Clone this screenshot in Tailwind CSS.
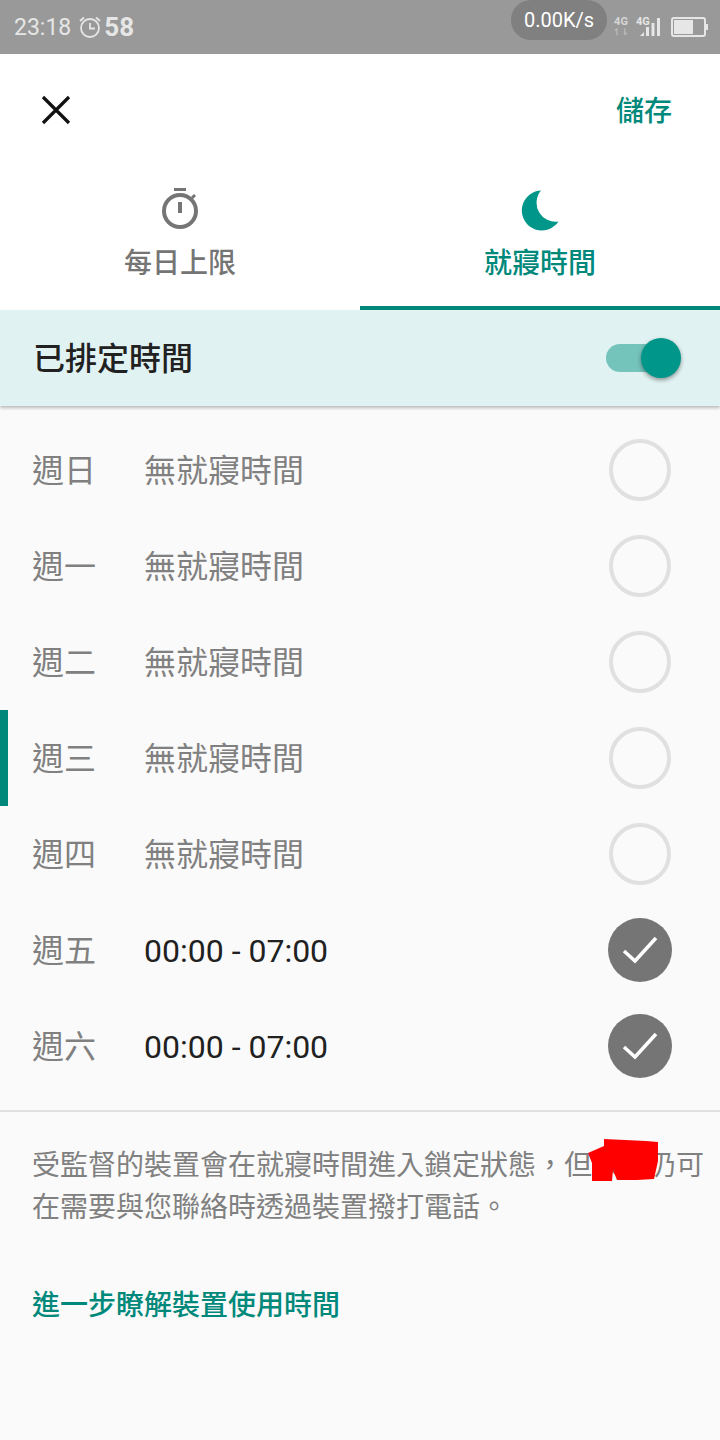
<!DOCTYPE html>
<html lang="zh-Hant">
<head>
  <meta charset="UTF-8">
  <title>就寢時間</title>
  <meta name="viewport" content="width=device-width, initial-scale=1.0">
  <script src="https://cdn.jsdelivr.net/npm/@tailwindcss/browser@4"></script>
</head>
<body class="bg-[#fafafa] font-['Roboto','Noto_Sans_CJK_TC',sans-serif] w-[720px] h-[1440px] overflow-hidden">

  <!-- Status bar -->
  <div class="h-[54px] bg-[#999999] flex items-center text-[#e6e6e6] pl-[14px] pr-[10px]">
    <span class="text-[23px] leading-none">23:18</span>
    <svg class="ml-[7px]" width="24" height="24" viewBox="0 0 24 24" fill="none" stroke="#e6e6e6" stroke-width="1.8">
      <circle cx="12" cy="13" r="9"/>
      <path d="M12 8v5.5h5M2 6l4-3.5M22 6l-4-3.5"/>
    </svg>
    <span class="ml-[2px] text-[26px] font-bold leading-none">58</span>
    <div class="ml-auto flex items-center">
      <div class="w-[96px] h-[40px] -mt-[14px] rounded-full bg-[#808080] text-white text-[20px] flex items-center justify-center">0.00K/s</div>
      <div class="ml-[5px] w-[18px] flex flex-col items-center text-[11px] font-bold leading-[11px] text-[#d6d6d6]">
        <span>4G</span>
        <span class="text-[#bdbdbd] text-[9px]">↿⇂</span>
      </div>
      <svg class="ml-[6px]" width="26" height="26" viewBox="0 0 26 26" fill="#e6e6e6">
        <text x="0" y="11" font-size="11" font-weight="700" font-family="Roboto">4G</text>
        <path d="M4 22l4-4v4zM10 13h3v9h-3zM15.500 9h3v13h-3zM21 4h3v18h-3z"/>
      </svg>
      <svg class="ml-[8px]" width="40" height="24" viewBox="0 0 40 24" fill="none">
        <rect x="2" y="3" width="33" height="18" rx="2" stroke="#e6e6e6" stroke-width="2"/>
        <rect x="4" y="5" width="19" height="14" fill="#e6e6e6"/>
        <rect x="36" y="9" width="2" height="6" fill="#e6e6e6"/>
      </svg>
    </div>
  </div>

  <div class="bg-white">
    <!-- Header -->
    <div class="h-[112px] flex items-center justify-between pl-[41px] pr-[48px]">
      <svg width="30" height="30" viewBox="0 0 30 30" fill="none" stroke="#111111" stroke-width="3.200">
        <path d="M2 2l26 26M28 2L2 28"/>
      </svg>
      <span class="text-[28px] font-medium text-[#00897b] mt-[3px]">儲存</span>
    </div>

    <!-- Tabs -->
    <div class="grid grid-cols-2 h-[144px]">
      <div class="flex flex-col items-center pt-[20px] text-[#757575] text-[28px] font-medium">
        <svg width="40" height="46" viewBox="0 0 40 46" fill="none" stroke="#757575" stroke-width="4">
          <path d="M14 3.500h12" stroke-width="3"/>
          <circle cx="20" cy="25" r="16"/>
          <path d="M20 16v11" stroke-width="4"/>
          <path d="M32 12l3-3" stroke-width="3"/>
        </svg>
        <span class="mt-[12px] leading-[40px]">每日上限</span>
      </div>
      <div class="flex flex-col items-center pt-[20px] text-[#00897b] text-[28px] font-medium border-b-4 border-[#00897b]">
        <svg width="40" height="46" viewBox="0 0 40 46" fill="#00968a">
          <path d="M21 4.500A20 20 0 1 0 38.500 35.500A19 19 0 0 1 21 4.500z"/>
        </svg>
        <span class="mt-[12px] leading-[40px]">就寢時間</span>
      </div>
    </div>
  </div>

  <!-- Schedule banner -->
  <div class="h-[96px] bg-[#e0f2f1] flex items-center justify-between pl-[33px] pr-[39px] shadow-[0_2px_3px_rgba(0,0,0,0.25)] relative">
    <span class="text-[32px] font-medium text-[#212121] mt-[2px]">已排定時間</span>
    <div class="relative w-[75px] h-[40px] flex items-center">
      <div class="w-[64px] h-[28px] rounded-full bg-[#74c4bc]"></div>
      <div class="absolute right-0 top-0 w-[40px] h-[40px] rounded-full bg-[#00968a] shadow-[0_2px_4px_rgba(0,0,0,0.4)]"></div>
    </div>
  </div>

  <!-- Days -->
  <div class="pt-[16px] relative">
    <div class="absolute left-0 top-[304px] w-[8px] h-[96px] bg-[#00897b]"></div>

    <div class="h-[96px] flex items-center pl-[32px] pr-[49px] text-[32px] text-[#808080]">
      <span class="w-[112px] mt-[2px]">週日</span><span class="mt-[2px]">無就寢時間</span>
      <div class="ml-auto w-[62px] h-[62px] rounded-full border-[4px] border-[#e0e0e0]"></div>
    </div>
    <div class="h-[96px] flex items-center pl-[32px] pr-[49px] text-[32px] text-[#808080]">
      <span class="w-[112px] mt-[2px]">週一</span><span class="mt-[2px]">無就寢時間</span>
      <div class="ml-auto w-[62px] h-[62px] rounded-full border-[4px] border-[#e0e0e0]"></div>
    </div>
    <div class="h-[96px] flex items-center pl-[32px] pr-[49px] text-[32px] text-[#808080]">
      <span class="w-[112px] mt-[2px]">週二</span><span class="mt-[2px]">無就寢時間</span>
      <div class="ml-auto w-[62px] h-[62px] rounded-full border-[4px] border-[#e0e0e0]"></div>
    </div>
    <div class="h-[96px] flex items-center pl-[32px] pr-[49px] text-[32px] text-[#808080]">
      <span class="w-[112px] mt-[2px]">週三</span><span class="mt-[2px]">無就寢時間</span>
      <div class="ml-auto w-[62px] h-[62px] rounded-full border-[4px] border-[#e0e0e0]"></div>
    </div>
    <div class="h-[96px] flex items-center pl-[32px] pr-[49px] text-[32px] text-[#808080]">
      <span class="w-[112px] mt-[2px]">週四</span><span class="mt-[2px]">無就寢時間</span>
      <div class="ml-auto w-[62px] h-[62px] rounded-full border-[4px] border-[#e0e0e0]"></div>
    </div>
    <div class="h-[96px] flex items-center pl-[32px] pr-[48px] text-[32px] text-[#808080]">
      <span class="w-[112px] mt-[2px]">週五</span><span class="text-[#212121] mt-[2px]">00:00 - 07:00</span>
      <div class="ml-auto w-[64px] h-[64px] rounded-full bg-[#757575] flex items-center justify-center">
        <svg width="36" height="30" viewBox="0 0 36 30" fill="none" stroke="#ffffff" stroke-width="3.500"><path d="M2 16l11 10L34 3"/></svg>
      </div>
    </div>
    <div class="h-[96px] flex items-center pl-[32px] pr-[48px] text-[32px] text-[#808080]">
      <span class="w-[112px] mt-[2px]">週六</span><span class="text-[#212121] mt-[2px]">00:00 - 07:00</span>
      <div class="ml-auto w-[64px] h-[64px] rounded-full bg-[#757575] flex items-center justify-center">
        <svg width="36" height="30" viewBox="0 0 36 30" fill="none" stroke="#ffffff" stroke-width="3.500"><path d="M2 16l11 10L34 3"/></svg>
      </div>
    </div>
  </div>

  <!-- Footer note -->
  <div class="mt-[16px] border-t-2 border-[#e0e0e0] pt-[33px] pl-[32px] pr-[14px] relative">
    <p class="text-[28px] leading-[42px] text-[#808080]">受監督的裝置會在就寢時間進入鎖定狀態，但孩子仍可在需要與您聯絡時透過裝置撥打電話。</p>
    <svg class="absolute left-[588px] top-[27px]" width="72" height="44" viewBox="0 0 72 44" fill="#ff0000">
      <path d="M0 14L16 7V0L58 2 70 3V22L66 40 49 41H29L25 31 24 42H4V24z"/>
    </svg>
    <a class="block mt-[56px] text-[28px] font-medium text-[#00897b]">進一步瞭解裝置使用時間</a>
  </div>
</body>
</html>
